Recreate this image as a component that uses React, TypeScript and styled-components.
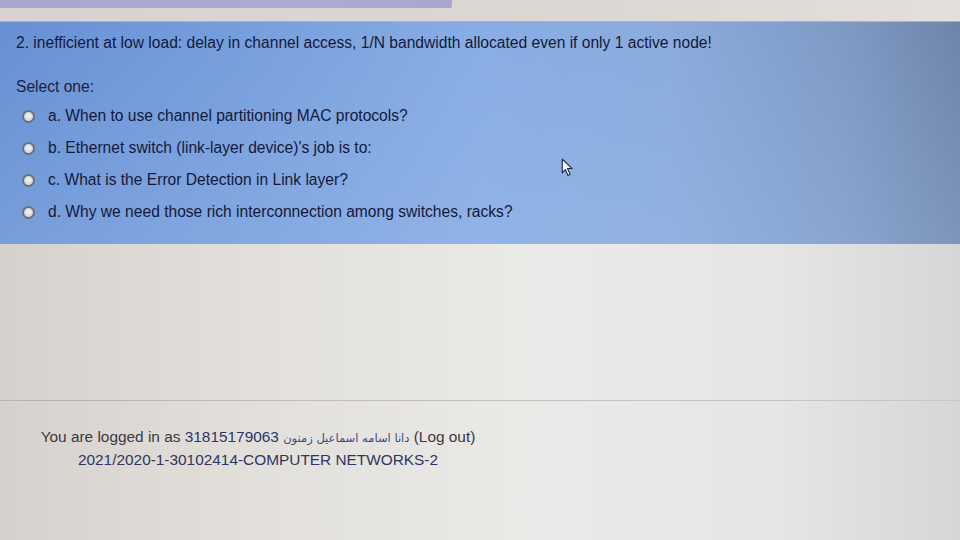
import React from "react";
import styled, { createGlobalStyle } from "styled-components";

const Global = createGlobalStyle`
  html, body { margin: 0; padding: 0; }
  body { width: 960px; height: 540px; overflow: hidden; font-family: "Liberation Sans", Arial, sans-serif; }
`;

const Page = styled.div`
  position: relative;
  width: 960px;
  height: 540px;
  display: flex;
  flex-direction: column;
  background: linear-gradient(90deg, #d6d1cc 0%, #e2dfdb 25%, #eaeae8 55%, #e6e6e6 80%, #d6d6d8 100%);
  overflow: hidden;
`;

const TopStrip = styled.div`
  height: 21px;
  background: linear-gradient(90deg, #d8d2d2 0%, #dcd6d4 60%, #e4dedc 100%);
  flex-shrink: 0;
`;

const TabBar = styled.div`
  width: 452px;
  height: 8px;
  background: linear-gradient(90deg, #aaa6cc 0%, #aeaad2 70%, #a9a6d0 100%);
  border-bottom-right-radius: 2px;
`;

const QuestionPanel = styled.div`
  height: 223px;
  flex-shrink: 0;
  box-sizing: border-box;
  padding: 11px 16px 0 16px;
  background:
    linear-gradient(180deg, rgba(120, 150, 220, 0.0) 0%, rgba(170, 200, 240, 0.25) 100%),
    linear-gradient(90deg, #6690d4 0%, #769edc 25%, #88ade4 50%, #8aabdc 70%, #7e9ac4 88%, #6e84aa 100%);
  border-top: 1px solid #9bb4e0;
  color: #15193a;
  font-size: 15.6px;
`;

const QuestionText = styled.div`
  line-height: 20px;
`;

const SelectLabel = styled.div`
  margin-top: 24px;
  line-height: 20px;
  color: #1e2140;
`;

const Options = styled.div`
  display: flex;
  flex-direction: column;
  gap: 12px;
  margin-top: 9px;
  padding-left: 6px;
`;

const Option = styled.label`
  display: flex;
  align-items: center;
  gap: 13px;
  line-height: 20px;
  color: #15193a;
`;

const Radio = styled.span`
  width: 13px;
  height: 13px;
  border-radius: 50%;
  box-sizing: border-box;
  border: 2px solid #6c7180;
  background: radial-gradient(circle at 50% 45%, #f2f2ee 0%, #d6d6d2 70%);
  flex-shrink: 0;
`;

const Blank = styled.div`
  flex: 1;
`;

const Divider = styled.div`
  height: 1px;
  background: linear-gradient(90deg, #b8b4b0 0%, #c4c2c0 60%, #c8c8c8 100%);
`;

const Footer = styled.div`
  width: 516px;
  height: 139px;
  box-sizing: border-box;
  padding-top: 25px;
  text-align: center;
  font-size: 15.4px;
  line-height: 22px;
  color: #3a3a40;
`;

const FooterLine = styled.div``;

const Num = styled.span`
  color: #2c3566;
`;

const ArabicName = styled.span`
  font-family: "DejaVu Sans", "Noto Sans", sans-serif;
  font-size: 11.5px;
  color: #3e4a78;
  unicode-bidi: isolate;
`;

const CourseLine = styled.div`
  color: #2f3660;
`;

const Cursor = styled.svg`
  position: absolute;
  left: 561px;
  top: 158px;
`;

const options = [
  "a. When to use channel partitioning MAC protocols?",
  "b. Ethernet switch (link-layer device)'s job is to:",
  "c. What is the Error Detection in Link layer?",
  "d. Why we need those rich interconnection among switches, racks?",
];

export default function App() {
  return (
    <Page>
      <Global />
      <TopStrip>
        <TabBar />
      </TopStrip>
      <QuestionPanel>
        <QuestionText>
          2. inefficient at low load: delay in channel access, 1/N bandwidth allocated even if only 1 active node!
        </QuestionText>
        <SelectLabel>Select one:</SelectLabel>
        <Options>
          {options.map((o) => (
            <Option key={o}>
              <Radio />
              <span>{o}</span>
            </Option>
          ))}
        </Options>
      </QuestionPanel>
      <Blank />
      <Divider />
      <Footer>
        <FooterLine>
          You are logged in as <Num>31815179063</Num>{" "}
          <ArabicName dir="rtl">دانا اسامه اسماعيل زمنون</ArabicName> (Log out)
        </FooterLine>
        <CourseLine>2021/2020-1-30102414-COMPUTER NETWORKS-2</CourseLine>
      </Footer>
      <Cursor width="13" height="19" viewBox="0 0 12 18">
        <path d="M1 1 L1 14 L4 11 L6.5 16.5 L8.5 15.5 L6 10 L10.5 10 Z" fill="#f4f6fb" stroke="#1a2040" strokeWidth="1" strokeLinejoin="round" />
      </Cursor>
    </Page>
  );
}
